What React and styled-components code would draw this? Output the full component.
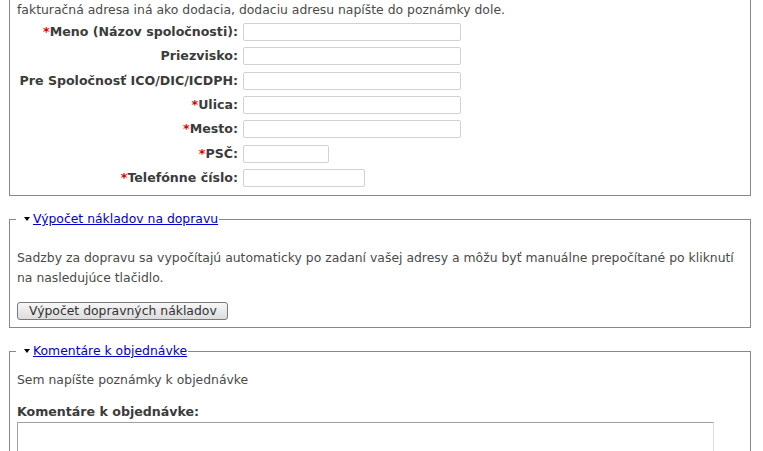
import React from 'react'
import styled, { createGlobalStyle } from 'styled-components'

const GlobalStyle = createGlobalStyle`
  html, body {
    margin: 0;
    padding: 0;
    background: #fff;
  }
  body {
    font-family: "DejaVu Sans", Verdana, sans-serif;
    font-size: 12.4px;
    line-height: 20px;
    color: #4a4a4a;
  }
`;

const fields = [
  { label: 'Meno (Názov spoločnosti)', required: true, width: 218 },
  { label: 'Priezvisko', width: 218 },
  { label: 'Pre Spoločnosť ICO/DIC/ICDPH', width: 218 },
  { label: 'Ulica', required: true, width: 218 },
  { label: 'Mesto', required: true, width: 218 },
  { label: 'PSČ', required: true, width: 86 },
  { label: 'Telefónne číslo', required: true, width: 122 },
];

export default function App() {
  return (
    <Page>
      <GlobalStyle />
      <Box $cut>
        <Intro>fakturačná adresa iná ako dodacia, dodaciu adresu napíšte do poznámky dole.</Intro>
        <Form>
          {fields.map((f) => (
            <Row key={f.label}>
              <Label>
                {f.required && <Req>*</Req>}
                {f.label}:
              </Label>
              <TextInput type="text" $width={f.width} />
            </Row>
          ))}
        </Form>
      </Box>

      <Box>
        <Legend>
          <Toggle href="#"><Arrow />Výpočet nákladov na dopravu</Toggle>
        </Legend>
        <Help>
          Sadzby za dopravu sa vypočítajú automaticky po zadaní vašej adresy a môžu byť manuálne prepočítané po kliknutí
          na nasledujúce tlačidlo.
        </Help>
        <Button type="button">Výpočet dopravných nákladov</Button>
      </Box>

      <Box>
        <Legend>
          <Toggle href="#"><Arrow />Komentáre k objednávke</Toggle>
        </Legend>
        <Description>Sem napíšte poznámky k objednávke</Description>
        <FieldLabel>Komentáre k objednávke:</FieldLabel>
        <Comments />
      </Box>
    </Page>
  );
}

const Page = styled.div`
  padding: 0 12px 0 9px;
`;

const Box = styled.fieldset`
  margin: 13px 0 0;
  padding: 0 7px 7px;
  border: 1px solid #888;
  min-width: 0;

  ${(p) => p.$cut && `
    margin-top: 0;
    border-top: none;
    padding-bottom: 5px;
  `}
`;

const Legend = styled.legend`
  margin-left: -1px;
  padding: 0 1px 0 0;
  line-height: 20px;
`;

const Toggle = styled.a`
  color: #0000cc;
  text-decoration: underline;
`;

const Arrow = styled.span`
  display: inline-block;
  vertical-align: middle;
  margin: -2px 3px 0 8px;
  width: 0;
  height: 0;
  border-left: 3px solid transparent;
  border-right: 3px solid transparent;
  border-top: 4px solid #000;
`;

const Intro = styled.div`
  line-height: 20px;
`;

const Form = styled.div`
  display: flex;
  flex-direction: column;
`;

const Row = styled.div`
  display: flex;
  align-items: center;
  height: 24.33px;
  gap: 5px;
`;

const Label = styled.label`
  width: 221px;
  text-align: right;
  font-size: 12.6px;
  font-weight: bold;
  color: #3b3b3b;
  white-space: nowrap;
`;

const Req = styled.span`
  color: #e00000;
  font-weight: bold;
`;

const TextInput = styled.input`
  box-sizing: border-box;
  width: ${(p) => p.$width}px;
  height: 18px;
  margin: 0;
  padding: 1px 3px;
  border: 1px solid #d2d2d2;
  border-radius: 2px;
  background: #fff;
  font: inherit;
`;

const Help = styled.p`
  margin: 19px 0 0;
  line-height: 20px;
`;

const Button = styled.button`
  display: block;
  box-sizing: border-box;
  margin-top: 14px;
  width: 211px;
  height: 18px;
  padding: 0 11px;
  border: 1px solid #7a7a7a;
  border-radius: 3px;
  background: linear-gradient(#f7f7f7, #dcdcdc);
  font-family: "DejaVu Sans", Verdana, sans-serif;
  font-size: 12.4px;
  line-height: 16px;
  color: #333;
  text-align: left;
  white-space: nowrap;
`;

const Description = styled.div`
  margin-top: 9px;
  line-height: 20px;
`;

const FieldLabel = styled.label`
  display: block;
  margin-top: 12px;
  font-size: 12.6px;
  font-weight: bold;
  color: #3b3b3b;
  line-height: 20px;
`;

const Comments = styled.textarea`
  display: block;
  box-sizing: border-box;
  width: 697px;
  height: 110px;
  margin: 0;
  border: 1px solid;
  border-color: #a0a0a0 #dcdcdc #dcdcdc #a0a0a0;
  resize: none;
  font: inherit;
`;
